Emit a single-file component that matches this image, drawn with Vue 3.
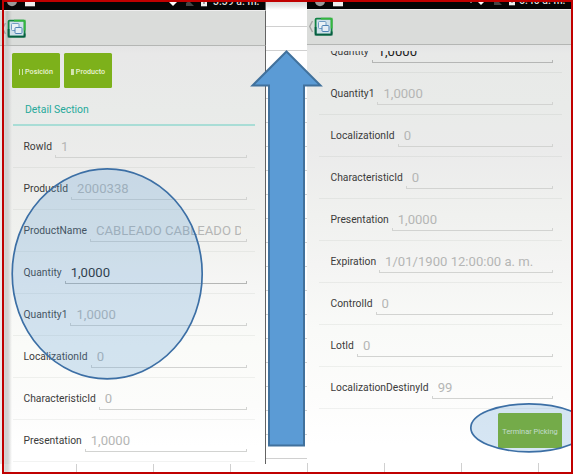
<script setup>
const leftRows = [
  { label: 'RowId', value: '1' },
  { label: 'ProductId', value: '2000338' },
  { label: 'ProductName', value: 'CABLEADO CABLEADO D' },
  { label: 'Quantity', value: '1,0000', active: true },
  { label: 'Quantity1', value: '1,0000' },
  { label: 'LocalizationId', value: '0' },
  { label: 'CharacteristicId', value: '0' },
  { label: 'Presentation', value: '1,0000' }
]
const rightRows = [
  { label: 'Quantity', value: '1,0000', active: true },
  { label: 'Quantity1', value: '1,0000' },
  { label: 'LocalizationId', value: '0' },
  { label: 'CharacteristicId', value: '0' },
  { label: 'Presentation', value: '1,0000' },
  { label: 'Expiration', value: '1/01/1900 12:00:00 a. m.' },
  { label: 'ControlId', value: '0' },
  { label: 'LotId', value: '0' },
  { label: 'LocalizationDestinyId', value: '99' }
]
const phones = [
  { side: 'left', time: '3:39 a. m.', rows: leftRows },
  { side: 'right', time: '6:40 a. m.', rows: rightRows }
]
</script>

<template>
  <main class="sheet">
    <section v-for="p in phones" :key="p.side" class="phone" :class="p.side">
      <div class="status">
        <svg class="notes" width="36" height="10" viewBox="0 0 36 10">
          <circle cx="6" cy="1.2" r="5" fill="#999" />
          <rect x="19" y="0" width="10" height="6.3" fill="#eee" />
        </svg>
        <svg class="signals" width="50" height="10" viewBox="0 0 50 10">
          <path v-if="p.side === 'right'" d="M0 2h4l-2 2z" fill="#ddd" />
          <path d="M8 2h8l-4 4z" fill="#fff" />
          <path d="M25 6V3l3-2 5 5z" fill="#444" />
          <path d="M40 0h6v6.3h-6z" fill="#eee" />
          <path d="M43 1v3" stroke="#555" />
        </svg>
        <span class="time">{{ p.time }}</span>
      </div>
      <header class="bar">
        <svg width="26" height="20" viewBox="0 0 26 20">
          <path d="M5.5 4L2.7 9.5 5.5 15" fill="none" stroke="#a4a6a4" stroke-width="1.4" />
          <rect x="8.6" y="1.6" width="16" height="16" rx="1" fill="#cfe0ea" stroke="#128344" stroke-width="1.8" />
          <path d="M14 1.6h10.6v10" fill="none" stroke="#35b83d" stroke-width="1.8" />
          <path d="M8.6 10v7.6h16v-3" fill="none" stroke="#075e43" stroke-width="1.8" />
          <rect x="11.5" y="4.5" width="7.5" height="7" rx="1" fill="#e9f1f5" stroke="#719cc3" />
          <rect x="15" y="8.5" width="7" height="6" rx="1" fill="#e4eef5" stroke="#4f83b4" />
        </svg>
      </header>
      <div class="body">
        <template v-if="p.side === 'left'">
          <div class="buttons">
            <button class="btn"><i class="bars"></i>Posición</button>
            <button class="btn"><i class="bars solid"></i>Producto</button>
          </div>
          <h2 class="section">Detail Section</h2>
        </template>
        <div class="rows">
          <div v-for="r in p.rows" :key="r.label" class="row" :class="{ active: r.active }">
            <label class="label">{{ r.label }}</label>
            <div class="field"><span class="value">{{ r.value }}</span></div>
          </div>
        </div>
        <button v-if="p.side === 'right'" class="btn finish">Terminar Picking</button>
      </div>
      <div class="ticks"></div>
    </section>
    <div class="gutter"></div>
    <svg class="shapes" width="573" height="474" viewBox="0 0 573 474">
      <g fill="#5b9bd5" stroke="#41719c" stroke-width="2">
        <path d="M286.5 51.5L320.5 85.5H304V445.5H269V85.5H252.5Z" />
        <g fill-opacity=".25" stroke="#3c6fa5" stroke-width="1.7">
          <ellipse cx="107.2" cy="273.8" rx="95" ry="105" />
          <ellipse cx="529" cy="427.8" rx="58.2" ry="24" />
        </g>
      </g>
    </svg>
    <div class="frame"></div>
  </main>
</template>

<style>
body { margin: 0; overflow: hidden; }
</style>

<style scoped>
.sheet {
  position: relative;
  width: 573px;
  height: 474px;
  display: grid;
  grid-template-columns: 266px 41px 266px;
  overflow: hidden;
  background: #fff;
  font-family: Roboto, sans-serif;
}
.phone {
  grid-row: 1;
  height: 474px;
  min-width: 0;
  display: flex;
  flex-direction: column;
  overflow: hidden;
}
.left { grid-column: 1; }
.right { grid-column: 3; }
.gutter {
  grid-column: 2;
  grid-row: 1;
  height: 459px;
  background:
    linear-gradient(#d2d2d2, #e8e8e8 6px, #fff 10px) 0 0 / 100% 10px no-repeat,
    repeating-linear-gradient(transparent 0 23px, #d0d0d0 23px 24px) 0 3px;
}
.status {
  box-sizing: border-box;
  flex: none;
  height: 10px;
  display: flex;
  align-items: flex-start;
  background: #050505;
  color: #ddd;
  padding-left: 6px;
  overflow: hidden;
}
.right .status { height: 9px; padding-left: 7px; }
.notes { flex: none; margin-right: 121px; }
.left .signals { margin-left: -2px; }
.right .signals { margin-left: 5px; margin-top: -1px; }
.signals { flex: none; }
.time { font-size: 10.5px; font-weight: 500; line-height: 11px; margin-top: -4px; margin-left: 2px; white-space: nowrap; }
.right .time { margin-top: -5px; margin-left: -5px; }
.right .signals { margin-left: -2px; margin-right: 5px; }
.bar {
  box-sizing: border-box;
  flex: none;
  height: 36px;
  padding-top: 8px;
  background: #dadcda;
  border-top: 1px solid #eee;
  border-bottom: 1px solid #b4b6b4;
}
.bar svg { display: block; }
.right .bar { padding-top: 7px; }
.body {
  box-sizing: border-box;
  height: 418px;
  flex: none;
  padding: 7px 10px 0 12px;
  background: linear-gradient(#e4e5e5, #e8e9e8 8px, #e9ebe9 60px, #ebebeb 105px, #f0f1ef 170px, #f4f4f3 220px, #f9faf8 285px, #fcfcfb 350px, #fff 400px);
  overflow: hidden;
}
.left .body {
  background:
    linear-gradient(90deg, #e9e9e9 3px, #cfd0cf 5px, #d3d4d3 8px, transparent 12px) 0 0 / 12px 100% no-repeat,
    linear-gradient(#e4e5e5, #e8e8e8 8px, #e9ebe9 65px, #ececeb 115px, #f0f1ee 185px, #f6f6f5 240px, #fafbf8 300px, #fcfcfb 360px, #fff 400px);
}
.left .bar { background: linear-gradient(90deg, #dadcda 4px, #bcbfbc 7px, #dadcda 12px); }
.left .status, .left .bar, .left .body { border-right: 1px solid #636363; }
.right .body { padding: 0 11px 0 12px; }
.buttons { display: flex; gap: 4px; }
.btn {
  display: flex;
  align-items: center;
  justify-content: center;
  gap: 2px;
  width: 48px;
  height: 35px;
  padding: 2px 0 0;
  border: 0;
  border-radius: 1.5px;
  background: #7db11b;
  color: #eaf4d5;
  font: 500 7.2px Roboto, sans-serif;
  white-space: nowrap;
}
.bars { width: 2px; height: 6px; border: solid #d0e2a5; border-width: 0 1px; }
.bars.solid { background: #d5e5b0; border-width: 0 1px 0 0; }
.section {
  box-sizing: border-box;
  height: 38px;
  margin: 0 0 0 1px;
  padding-left: 12px;
  border-bottom: 2px solid #a9ddd6;
  color: #25a99a;
  font-size: 10.4px;
  font-weight: 400;
  line-height: 43px;
}
.row {
  box-sizing: border-box;
  height: 42px;
  margin-left: 1px;
  padding: 0 8px 0 10.5px;
  display: flex;
  align-items: center;
  border-bottom: 1px solid rgba(90, 100, 90, .08);
}
.right .row { margin-left: 0; padding-right: 9px; padding-left: 11.5px; }
.right .rows { height: 358px; overflow: hidden; display: flex; flex-direction: column; justify-content: flex-end; margin-top: 6px; }
.right .row { flex: none; }
.label { flex: none; color: #3b3b3b; font-size: 10.3px; line-height: 14px; margin-right: 3px; padding-top: 1px; }
.field {
  position: relative;
  box-sizing: border-box;
  flex: 1;
  min-width: 0;
  height: 24px;
  padding: 0 6px;
  border-bottom: 1px solid #d2d3d1;
  line-height: 26px;
  margin-top: -1px;
}
.field::after {
  content: '';
  position: absolute;
  inset: auto 0 0;
  height: 2px;
  border: solid #d2d3d1;
  border-width: 0 1px;
}
.value { display: block; height: 24px; overflow: hidden; white-space: nowrap; color: #b5b6b5; font-size: 13.1px; }
.active .value { color: #222; }
.active .field, .active .field::after { border-color: #b5b6b5; }
.finish { width: 64px; margin: 4px 0 0 auto; color: #e2f0d0; font-size: 7.4px; font-weight: 400; }
.ticks {
  flex: 1;
  background: repeating-linear-gradient(90deg, transparent 0 76px, #d0d0d0 76px 77px) #fff;
}
.left .ticks {
  background:
    linear-gradient(90deg, #fff 3px, #d3d4d3 5px, #dadbda 8px, transparent 12px) 0 0 / 12px 100% no-repeat,
    repeating-linear-gradient(90deg, transparent 0 76px, #d0d0d0 76px 77px) #fff;
}
.right .ticks { background: repeating-linear-gradient(90deg, #d0d0d0 0 1px, transparent 1px 77px) #fff; }
.shapes { position: absolute; left: 0; top: 0; }
.frame { position: absolute; inset: 0 0 0 2px; border: 2px solid #c00000; }
</style>
